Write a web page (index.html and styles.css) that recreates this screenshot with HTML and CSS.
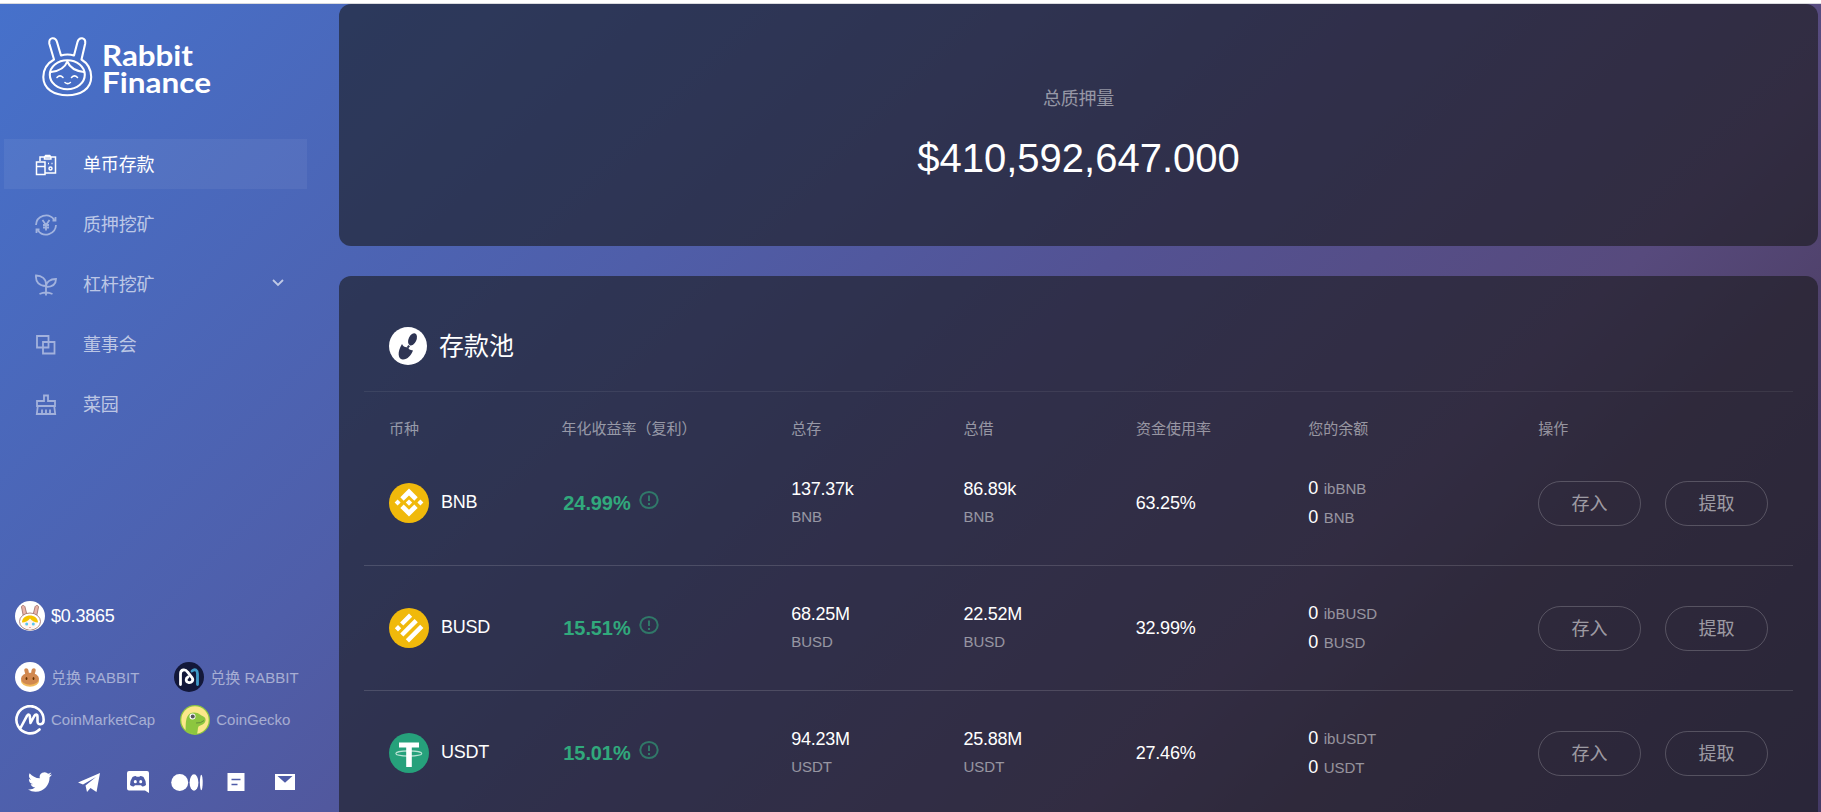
FILE: index.html
```html
<!doctype html>
<html lang="zh">

<head>
    <meta charset="utf-8">
    <title>Rabbit Finance</title>
    <link rel="stylesheet" href="styles.css">
</head>

<body>
    <div class="topline"></div>
    <div class="app">
        <aside class="sidebar">
            <svg class="logo" width="180" height="64" viewBox="0 0 180 64" fill="none" stroke="#fff" stroke-width="2.1" stroke-linecap="round" stroke-linejoin="round">
                <path d="M13 23.500 L8.300 7.500 C7.300 1 14.500 0.500 16 6 L20 19.500 Q26.500 17.500 33 19.500 L36.500 6 C38 0.500 45 1 44.200 7.500 L40.500 23.500 C47 27.500 50.200 33.500 50.200 41 C50.200 53 39.500 59.200 26.300 59.200 S2.300 53 2.300 41 C2.300 33.500 6 27.500 13 23.500 Z" />
                <ellipse cx="26.300" cy="38.700" rx="17.500" ry="14.500" />
                <path d="M26.300 25.500 Q23 34.500 10 36 M26.300 25.500 Q30 34.500 43 36" />
                <path d="M16 41.500 q3 -3.200 6 0 M30.500 41.500 q3 -3.200 6 0 M24 46.500 q2.700 2.200 5.400 0" stroke-width="1.600" />
                <text class="logo-text" x="61" y="30" textLength="91" lengthAdjust="spacingAndGlyphs">Rabbit</text>
                <text class="logo-text" x="61" y="57" textLength="109" lengthAdjust="spacingAndGlyphs">Finance</text>
            </svg>

            <nav class="nav">
                <a class="nav-item active">
                    <svg class="nav-icon" viewBox="0 0 22 22"><path d="M5 7V3h15.500v16h-10M9.500 3l1.200-1.500h4l1.200 1.500v2h-6.400zM1.500 8h8.500v12.500H1.500zM1.500 12.500H10M13 9.500h1M16.500 9.500h1" /><circle cx="15.500" cy="14.500" r="1.500" /></svg>
                    <span>单币存款</span>
                </a>
                <a class="nav-item">
                    <svg class="nav-icon" viewBox="0 0 22 22"><path d="M1 11A10 10 0 0 1 19 5.500M21 11A10 10 0 0 1 3 16.500M20.500 3v3.500h-3M1.500 19v-3.500h3M7.500 6l3.500 5 3.500-5M8 11h6M8 13.500h6M11 11v5.500" /></svg>
                    <span>质押挖矿</span>
                </a>
                <a class="nav-item">
                    <svg class="nav-icon" viewBox="0 0 22 22"><path d="M11 21.500V10C11 5 7 1.500 1 1.500 0.500 8 4 12 11 12M11 13c0-5 4-8 10-8 0 5-3.500 8-10 8M4.500 20q6.500-3 13 0" /></svg>
                    <span>杠杆挖矿</span>
                    <svg class="chevron" viewBox="0 0 12 8"><path d="M1 1l5 5 5-5" /></svg>
                </a>
                <a class="nav-item">
                    <svg class="nav-icon" viewBox="0 0 22 22"><path d="M2 2h11.500v11.500H2zM8 8h11.500v11.500H8z" /></svg>
                    <span>董事会</span>
                </a>
                <a class="nav-item">
                    <svg class="nav-icon" viewBox="0 0 22 22"><path d="M9 7V1.500h4V7h7v5H2V7zM2.800 12l-1 8h18.400l-1-8M7 20v-4.500M11 20v-4.500M15 20v-4.500" /></svg>
                    <span>菜园</span>
                </a>
            </nav>

            <div class="side-bottom">
                <div class="price">
                    <svg class="coin" viewBox="0 0 30 30">
                        <circle cx="15" cy="15" r="15" fill="#fff" />
                        <g stroke="#9c6b62" stroke-width=".8">
                            <path d="M8.500 16L6.500 6c0-2 3-2 3.500 0l2 8M21.500 16l2-10c0-2-3-2-3.500 0l-2 8" fill="#eab5aa" />
                            <ellipse cx="15" cy="20.500" rx="10.500" ry="8.500" fill="#fff" />
                        </g>
                        <circle cx="15" cy="21.500" r="7" fill="#fff4ee" />
                        <path d="M7 21.500c0-9.500 16-9.500 16 0-3 0-6-1.500-8-4-2 2.500-5 4-8 4z" fill="#f5c400" />
                        <circle cx="11.700" cy="23" r="1.500" fill="#5bc6ef" />
                        <circle cx="18.300" cy="23" r="1.500" fill="#5bc6ef" />
                        <path d="M14.500 26.500h1" stroke="#d66" />
                    </svg>
                    <span>$0.3865</span>
                </div>
                <div class="links">
                    <a class="link">
                        <svg class="coin" viewBox="0 0 30 30">
                            <circle cx="15" cy="15" r="15" fill="#fff" />
                            <ellipse cx="15" cy="19" rx="9" ry="5.800" fill="#f0b95b" />
                            <path d="M10.500 13L9.300 8.500c-.3-3 3.700-3 4.200 0l.5 3h2l.5-3c.5-3 4.500-3 4.200 0L19.500 13" fill="#d1884f" />
                            <ellipse cx="15" cy="16.700" rx="9" ry="6" fill="#d1884f" />
                            <ellipse cx="11.500" cy="16.500" rx=".9" ry="1.500" fill="#633001" />
                            <ellipse cx="18.500" cy="16.500" rx=".9" ry="1.500" fill="#633001" />
                        </svg>
                        <span>兑换 RABBIT</span>
                    </a>
                    <a class="link">
                        <svg class="coin" viewBox="0 0 30 30" fill="none" stroke-width="2.800" stroke-linecap="round">
                            <circle cx="15" cy="15" r="15" fill="#13183a" />
                            <path d="M18 9c3-2.500 5.500-1 5.500 3v10.500" stroke="#409ac7" />
                            <path d="M6.500 22.500V12c0-5 5-5 7-2l4.500 5.500c2 3-.5 5.500-3.500 5-3-.8-3-4-.5-5.500" stroke="#fff" />
                        </svg>
                        <span>兑换 RABBIT</span>
                    </a>
                </div>
                <div class="links second">
                    <a class="link">
                        <svg class="coin" viewBox="0 0 30 30" fill="none" stroke="#fff" stroke-linecap="round" stroke-linejoin="round">
                            <path d="M24.500 24.500A13.600 13.600 0 1 1 28.600 15.500C28.600 20 22.500 20.500 22.500 16.500V12c0-3-2-3-3.200-1L15.500 18l-.7-7c-.3-2-2-1.800-2.700-.3L5.500 23" stroke-width="2.600" />
                        </svg>
                        <span>CoinMarketCap</span>
                    </a>
                    <a class="link">
                        <svg class="coin" viewBox="0 0 30 30">
                            <circle cx="15" cy="15" r="15" fill="#8dc63f" />
                            <circle cx="15" cy="15" r="13.700" fill="#fbe88a" />
                            <path d="M5.500 26C6 19 5 12 10 8.500c3-2 8-1 10 1 3 2 6 2.500 5.500 6-.5 4-5 4.500-7 6-1 2-.5 4.500-1.500 7.500a14.500 14.500 0 0 1-11.500-3z" fill="#8dc63f" />
                            <circle cx="12.500" cy="11.500" r="3" fill="#fff" />
                            <circle cx="12.700" cy="11.500" r="2" fill="#58595b" />
                            <path d="M16 18q5 .5 8-2.500" stroke="#58803a" stroke-width=".8" fill="none" />
                        </svg>
                        <span>CoinGecko</span>
                    </a>
                </div>
                <div class="social">
                    <svg viewBox="0 0 24 24"><path d="M23.950 4.570a10 10 0 0 1-2.820.77 4.960 4.960 0 0 0 2.160-2.720c-.95.55-2 .96-3.130 1.180a4.920 4.920 0 0 0-8.380 4.480C7.690 8.090 4.070 6.130 1.640 3.160a4.820 4.820 0 0 0-.67 2.480c0 1.710.87 3.210 2.190 4.100a4.900 4.900 0 0 1-2.230-.62v.06a4.920 4.920 0 0 0 3.950 4.830 5 5 0 0 1-2.210.08 4.940 4.940 0 0 0 4.600 3.420A9.870 9.870 0 0 1 0 19.540a13.990 13.990 0 0 0 7.550 2.210c9.050 0 14-7.500 14-13.980 0-.21 0-.42-.02-.63a9.940 9.940 0 0 0 2.460-2.550z" /></svg>
                    <svg viewBox="0 0 24 24"><path d="M1 12.500L23 3l-3.500 19-6-4-3.500 4-1.500-6.500L19 7 6 14.500z" /></svg>
                    <svg viewBox="0 0 24 24"><path d="M3 1h18a2 2 0 0 1 2 2v20l-4-2.500H3a2 2 0 0 1-2-2V3a2 2 0 0 1 2-2z" /><path class="hole" d="M6.500 7q1.500-1 3.500-1l.5.800h3L14 6q2 0 3.500 1 2.500 3.500 2.500 8-2 1.500-3.800 1.500l-1.200-1.300h-6l-1.200 1.300Q6 16.500 4 15q0-4.500 2.500-8z" /><ellipse cx="9.300" cy="11.700" rx="1.500" ry="1.600" /><ellipse cx="14.700" cy="11.700" rx="1.500" ry="1.600" /></svg>
                    <svg class="wide" viewBox="0 0 32 24"><circle cx="8.700" cy="12.500" r="8.500" /><ellipse cx="23" cy="12.500" rx="4.400" ry="8.200" /><ellipse cx="30.300" cy="12.500" rx="1.400" ry="7.800" /></svg>
                    <svg viewBox="0 0 24 24"><path d="M3.500 3h17v18h-17z" /><path class="line" d="M7.500 9.500h9M7.500 14.500h6" /></svg>
                    <svg viewBox="0 0 24 24"><path d="M2 4h20v16H2z" /><path class="hole" d="M4.500 6h15L12 12.800z" /></svg>
                </div>
            </div>
        </aside>

        <main class="main">
            <section class="card total">
                <div class="total-label">总质押量</div>
                <div class="total-value">$410,592,647.000</div>
            </section>

            <section class="card pool">
                <div class="pool-title">
                    <svg width="38" height="38" viewBox="0 0 38 38">
                        <circle cx="19" cy="19" r="19" fill="#fff" />
                        <ellipse cx="23.500" cy="12.300" rx="3.900" ry="6.500" transform="rotate(25 23.500 12.300)" fill="#2e3453" />
                        <path d="M13 17q2 4 6 3 .5 3 5 3.500c-2 5-6 9.500-10.500 9S8 25 13 17zM19.500 18l1.500 1.500-1.500 1.500-1.500-1.500z" fill="#2e3453" />
                    </svg>
                    <h2>存款池</h2>
                </div>
                <div class="row head">
                    <div>币种</div>
                    <div>年化收益率（复利）</div>
                    <div>总存</div>
                    <div>总借</div>
                    <div>资金使用率</div>
                    <div>您的余额</div>
                    <div>操作</div>
                </div>
                <div class="row">
                    <div class="token">
                        <svg width="40" height="40" viewBox="0 0 40 40"><circle cx="20" cy="20" r="20" fill="#f0b90b" /><path d="M11.300 14.300L20 5.600l8.700 8.700-3.400 3.400L20 12.400l-5.300 5.300zM5.600 19.600l3-3 3 3-3 3zM11.300 24.900l3.400-3.400 5.300 5.300 5.300-5.300 3.400 3.400L20 33.600zM28.400 19.600l3-3 3 3-3 3zM16.800 19.600l3.200-3.200 3.200 3.200-3.200 3.200z" fill="#fff" /></svg>
                        <span>BNB</span>
                    </div>
                    <div class="apy">24.99%<svg class="info" viewBox="0 0 20 18"><ellipse cx="10" cy="9" rx="8.700" ry="8" /><path d="M10 4.500v5.500M10 12v2" /></svg></div>
                    <div class="amount"><b>137.37k</b><small>BNB</small></div>
                    <div class="amount"><b>86.89k</b><small>BNB</small></div>
                    <div class="rate">63.25%</div>
                    <div class="balance"><div>0 <small>ibBNB</small></div><div>0 <small>BNB</small></div></div>
                    <div class="actions"><button>存入</button><button>提取</button></div>
                </div>
                <div class="row">
                    <div class="token">
                        <svg width="40" height="40" viewBox="0 0 40 40"><circle cx="20" cy="20" r="20" fill="#f0b90b" /><path d="M20 5.500l3.200 3.200-8.900 8.900-3.200-3.200zM9 17l3.200 3.200L9 23.400l-3.200-3.200zM25.600 11l3.200 3.200-14.400 14.400-3.200-3.200zM31.200 16.800l3.200 3.200L20 34.500l-3.200-3.200z" fill="#fff" /></svg>
                        <span>BUSD</span>
                    </div>
                    <div class="apy">15.51%<svg class="info" viewBox="0 0 20 18"><ellipse cx="10" cy="9" rx="8.700" ry="8" /><path d="M10 4.500v5.500M10 12v2" /></svg></div>
                    <div class="amount"><b>68.25M</b><small>BUSD</small></div>
                    <div class="amount"><b>22.52M</b><small>BUSD</small></div>
                    <div class="rate">32.99%</div>
                    <div class="balance"><div>0 <small>ibBUSD</small></div><div>0 <small>BUSD</small></div></div>
                    <div class="actions"><button>存入</button><button>提取</button></div>
                </div>
                <div class="row">
                    <div class="token">
                        <svg width="40" height="40" viewBox="0 0 40 40"><circle cx="20" cy="20" r="20" fill="#26a17b" /><ellipse cx="19.800" cy="20.500" rx="13" ry="2.600" fill="none" stroke="#b9e2d4" stroke-width="1.100" /><path d="M10 9.500h20v5h-7.200V34h-5.600V14.500H10z" fill="#fff" /></svg>
                        <span>USDT</span>
                    </div>
                    <div class="apy">15.01%<svg class="info" viewBox="0 0 20 18"><ellipse cx="10" cy="9" rx="8.700" ry="8" /><path d="M10 4.500v5.500M10 12v2" /></svg></div>
                    <div class="amount"><b>94.23M</b><small>USDT</small></div>
                    <div class="amount"><b>25.88M</b><small>USDT</small></div>
                    <div class="rate">27.46%</div>
                    <div class="balance"><div>0 <small>ibUSDT</small></div><div>0 <small>USDT</small></div></div>
                    <div class="actions"><button>存入</button><button>提取</button></div>
                </div>
            </section>
        </main>
    </div>
</body>

</html>
```
FILE: styles.css
```css
* {
    box-sizing: border-box;
}

body {
    margin: 0;
    height: 100vh;
    overflow: hidden;
    background: #fff;
    color: #fff;
    font-family: "Liberation Sans", Arial, "Noto Sans CJK SC", sans-serif;
}

.topline {
    height: 4px;
    border-bottom: 1px solid #d9dade;
}

.app {
    display: flex;
    height: calc(100vh - 4px);
    overflow: hidden;
    background: linear-gradient(135deg, #4671cb 0%, #4f5ea9 34%, #535293 52%, #574a7d 72%, #50426c 80%, #443a66 100%);
}

.sidebar {
    width: 339px;
    flex: none;
    display: flex;
    flex-direction: column;
}

.logo {
    margin: 32px 0 0 41px;
}

.logo-text {
    font-family: Lato, sans-serif;
    font-size: 28px;
    font-weight: 700;
    fill: #fff;
    stroke: none;
}

.nav {
    margin: 39px 32px 0 4px;
    display: flex;
    flex-direction: column;
    gap: 10px;
}

.nav-item {
    display: flex;
    align-items: center;
    height: 50px;
    padding: 0 23px 3px 31px;
    font-size: 18px;
    letter-spacing: -.15px;
    color: rgba(255, 255, 255, .65);
}

.nav-item.active {
    color: #fff;
    background: rgba(255, 255, 255, .06);
}

.nav-icon {
    width: 22px;
    height: 22px;
    margin: 5px 26px 0 0;
    fill: none;
    stroke: currentColor;
    stroke-width: 1.8;
    opacity: .75;
}

.active .nav-icon {
    stroke-width: 1.5;
    opacity: 1;
}

.chevron {
    width: 12px;
    height: 8px;
    margin-left: auto;
    fill: none;
    stroke: currentColor;
    stroke-width: 1.8;
}

.side-bottom {
    margin-top: auto;
    padding: 0 0 18px 15px;
}

.coin {
    width: 30px;
    height: 30px;
    margin-right: 6px;
}

.price,
.link {
    display: flex;
    align-items: center;
}

.link span {
    padding-bottom: 2px;
}

.price {
    font-size: 18px;
    letter-spacing: -.2px;
    margin-bottom: 31px;
}

.links {
    display: flex;
    gap: 35px;
    font-size: 15px;
    color: rgba(255, 255, 255, .5);
}

.second {
    margin-top: 13px;
    gap: 25px;
}

.social {
    display: flex;
    align-items: center;
    gap: 25px;
    margin-top: 35px;
    padding-left: 13px;
}

.social svg {
    width: 24px;
    height: 24px;
    fill: #fff;
}

.social .wide {
    width: 32px;
    margin: 0 -4px 0 -4px;
}

.social .hole {
    fill: #4e5ca8;
}

.social .line {
    stroke: #4e5ca8;
    stroke-width: 1.6;
}

.main {
    flex: 1;
    display: flex;
    flex-direction: column;
    gap: 30px;
    padding-right: 3px;
}

.card {
    background: rgba(25, 25, 26, .6);
    border-radius: 12px;
}

.total {
    height: 242px;
    flex: none;
    padding-top: 82px;
    text-align: center;
}

.total-label {
    font-size: 18px;
    line-height: 26px;
    letter-spacing: -.2px;
    color: rgba(255, 255, 255, .5);
}

.total-value {
    margin-top: 23px;
    font-size: 40px;
    line-height: 46px;
}

.pool {
    flex: 1;
    padding: 0 25px;
    border-radius: 12px 12px 0 0;
}

.pool-title {
    display: flex;
    align-items: center;
    gap: 12px;
    height: 116px;
    padding: 25px 25px 0;
    border-bottom: 1px solid rgba(255, 255, 255, .07);
}

.pool-title h2 {
    margin: 0;
    padding-bottom: 4px;
    font-size: 25px;
    font-weight: 400;
}

.row {
    display: grid;
    grid-template-columns: 3fr 4fr 3fr 3fr 3fr 4fr 4fr;
    align-items: center;
    height: 125px;
    padding: 0 25px;
    border-bottom: 1px solid rgba(255, 255, 255, .14);
    font-size: 18px;
    letter-spacing: -.25px;
}

.row:last-child {
    border-bottom-color: transparent;
}

.head {
    height: 49px;
    padding-top: 22px;
    border-bottom: none;
    font-size: 15px;
    letter-spacing: 0;
    color: rgba(255, 255, 255, .5);
}

.row small {
    font-size: 15px;
    letter-spacing: 0;
    color: rgba(255, 255, 255, .5);
}

.token {
    display: flex;
    align-items: center;
    gap: 12px;
}

.token span {
    padding-bottom: 2px;
}

.apy {
    padding-left: 2px;
    font-size: 20px;
    font-weight: 700;
    letter-spacing: -.1px;
    color: #31a97c;
}

.info {
    width: 20px;
    height: 18px;
    margin-left: 8px;
    fill: none;
    stroke: #31a97c;
    stroke-width: 2;
    opacity: .6;
    vertical-align: 1px;
}

.amount b,
.amount small {
    display: block;
    font-weight: 400;
    line-height: 28px;
}

.balance div {
    line-height: 28px;
}

.balance small {
    margin-left: 1px;
}

.actions {
    display: flex;
    gap: 24px;
}

.actions button {
    width: 103px;
    height: 45px;
    border: 1px solid rgba(255, 255, 255, .2);
    border-radius: 23px;
    background: none;
    padding: 0 0 2px;
    font: inherit;
    color: rgba(255, 255, 255, .55);
}
```
